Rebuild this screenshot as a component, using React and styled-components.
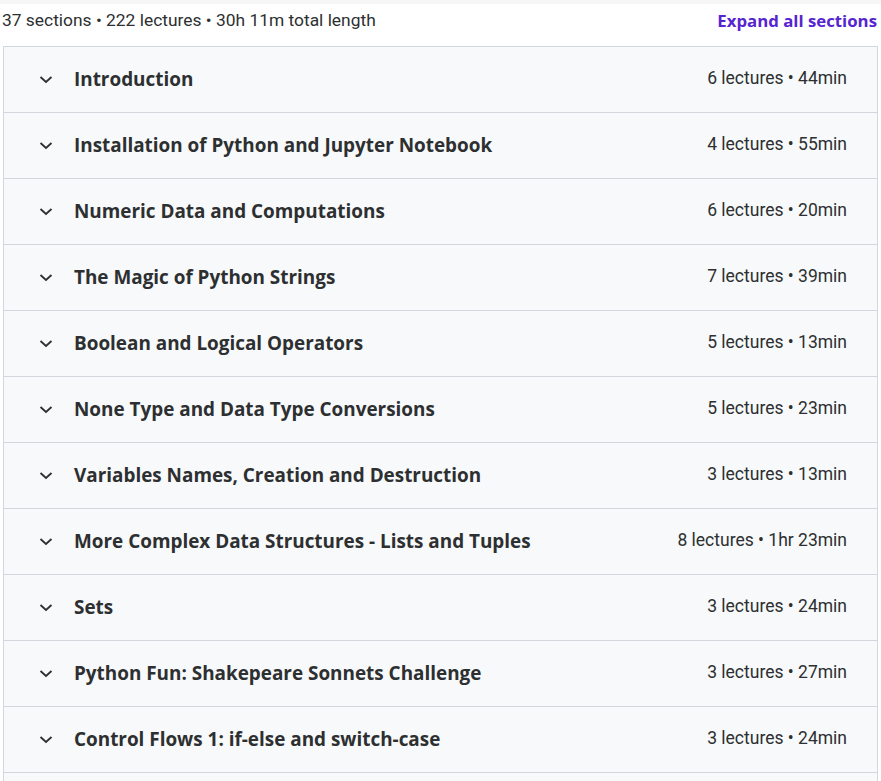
import React from "react";
import styled, { createGlobalStyle } from "styled-components";

const Global = createGlobalStyle`
  html, body { margin: 0; padding: 0; background: #ffffff; }
  body { font-family: "Roboto", "Liberation Sans", sans-serif; color: #2d2f31; }
`;

const Page = styled.div`
  width: 881px;
  border-top: 4px solid #f6f6f7;
  box-sizing: border-box;
`;

const Header = styled.div`
  display: flex;
  justify-content: space-between;
  align-items: center;
  height: 42px;
  box-sizing: border-box;
  padding: 0 4px 10px 2px;
`;

const Summary = styled.span`
  font-size: 17.4px;
  color: #2d2f31;
`;

const ExpandLink = styled.button`
  border: none;
  background: none;
  padding: 0;
  font-family: "Open Sans", "Roboto", sans-serif;
  font-size: 16.8px;
  font-weight: 700;
  color: #5624d0;
  cursor: pointer;
`;

const Curriculum = styled.div`
  margin: 0 3px;
  border: 1px solid #d1d7dc;
  border-bottom: none;
`;

const Row = styled.div`
  display: flex;
  align-items: center;
  height: 66px;
  box-sizing: border-box;
  border-bottom: 1px solid #d1d7dc;
  background: #f7f9fa;
  padding: 0 30px 1px 34px;
`;

const Chevron = styled.svg`
  width: 16px;
  height: 16px;
  flex: none;
  margin-right: 20px;
`;

const Title = styled.span`
  flex: 1;
  font-family: "Open Sans", "Roboto", sans-serif;
  font-size: 18.9px;
  font-weight: 700;
  color: #2d2f31;
`;

const Meta = styled.span`
  font-size: 17.5px;
  color: #2d2f31;
  margin-bottom: 2px;
`;

const sections = [
  ["Introduction", "6 lectures • 44min"],
  ["Installation of Python and Jupyter Notebook", "4 lectures • 55min"],
  ["Numeric Data and Computations", "6 lectures • 20min"],
  ["The Magic of Python Strings", "7 lectures • 39min"],
  ["Boolean and Logical Operators", "5 lectures • 13min"],
  ["None Type and Data Type Conversions", "5 lectures • 23min"],
  ["Variables Names, Creation and Destruction", "3 lectures • 13min"],
  ["More Complex Data Structures - Lists and Tuples", "8 lectures • 1hr 23min"],
  ["Sets", "3 lectures • 24min"],
  ["Python Fun: Shakepeare Sonnets Challenge", "3 lectures • 27min"],
  ["Control Flows 1: if-else and switch-case", "3 lectures • 24min"],
  ["Control Flows 2: Loops", "4 lectures • 30min"],
];

const ChevronIcon = () => (
  <Chevron viewBox="0 0 16 16">
    <path d="M2.5 6 L8 11 L13.5 6" fill="none" stroke="#2d2f31" strokeWidth="1.8" />
  </Chevron>
);

export default function App() {
  return (
    <Page>
      <Global />
      <Header>
        <Summary>37 sections • 222 lectures • 30h 11m total length</Summary>
        <ExpandLink>Expand all sections</ExpandLink>
      </Header>
      <Curriculum>
        {sections.map(([t, m]) => (
          <Row key={t}>
            <ChevronIcon />
            <Title>{t}</Title>
            <Meta>{m}</Meta>
          </Row>
        ))}
      </Curriculum>
    </Page>
  );
}
